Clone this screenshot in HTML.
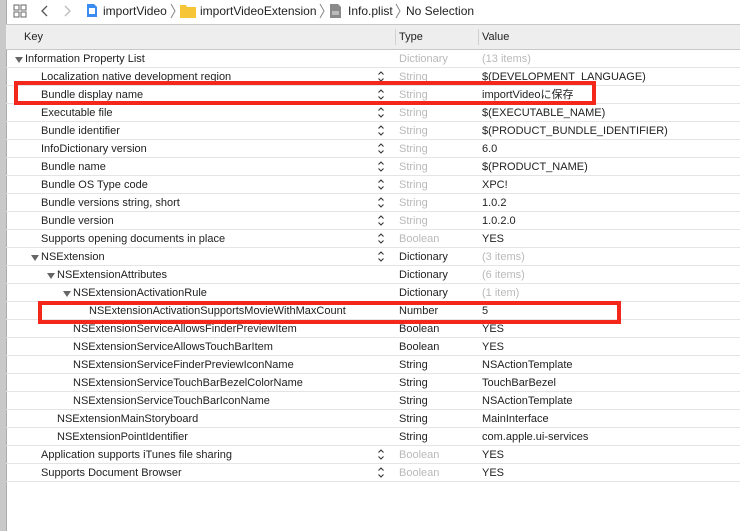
<!DOCTYPE html>
<html><head><meta charset="utf-8"><style>
body{margin:0;width:740px;height:531px;overflow:hidden;background:#fff;font-family:"Liberation Sans","Noto Sans CJK JP",sans-serif;font-size:11px;color:#222;position:relative}
.a{position:absolute;white-space:nowrap}
.r{position:absolute;left:6px;right:0;height:18px;border-bottom:1px solid #e4e4e4}
.r span{position:absolute;top:4px;white-space:nowrap;line-height:13px}
.g{color:#b9b9b9}
.r span.t{top:8px;width:0;height:0;border-left:4px solid transparent;border-right:4px solid transparent;border-top:6px solid #666}
.ch{position:absolute;left:371px;top:3px;width:8px;height:13px}
.box{position:absolute;border:4px solid #f4271b;box-sizing:border-box}
</style></head><body>
<svg width="0" height="0" style="position:absolute"><defs><symbol id="c" viewBox="0 0 8 13"><path d="M1.5 4.5 L4 2 L6.5 4.5 M1.5 8.5 L4 11 L6.5 8.5" stroke="#333" stroke-width="1.1" fill="none"/></symbol></defs></svg>
<div class="a" style="left:0;top:0;width:6px;height:531px;background:#c9c9c9;border-right:1px solid #aaa"></div>
<svg class="a" style="left:13px;top:4px" width="14" height="14" viewBox="0 0 14 14" fill="none" stroke="#666" stroke-width="1"><rect x="1" y="1" width="5" height="5"/><rect x="8" y="1" width="5" height="5"/><rect x="1" y="8" width="5" height="5"/><rect x="8" y="8" width="5" height="5"/></svg>
<svg class="a" style="left:40px;top:4px" width="10" height="14"><path d="M7 2 L2 7 L7 12" stroke="#555" stroke-width="1.3" fill="none"/></svg>
<svg class="a" style="left:63px;top:4px" width="10" height="14"><path d="M2 2 L7 7 L2 12" stroke="#bbb" stroke-width="1.3" fill="none"/></svg>
<svg class="a" style="left:86px;top:3px" width="12" height="15"><path d="M1 1h7l3 3v10H1z" fill="#3b8cf0"/><rect x="3" y="5" width="6" height="6" fill="#fff"/></svg>
<div class="a" style="left:103px;top:4px;font-size:12px">importVideo</div>
<svg class="a" style="left:170px;top:3px" width="6" height="16"><path d="M1 1 L5 8 L1 15" stroke="#888" fill="none"/></svg>
<svg class="a" style="left:180px;top:3px" width="16" height="15"><path d="M0 2h6l1 2h9v11H0z" fill="#f6c538"/></svg>
<div class="a" style="left:200px;top:4px;font-size:12px">importVideoExtension</div>
<svg class="a" style="left:319px;top:3px" width="6" height="16"><path d="M1 1 L5 8 L1 15" stroke="#888" fill="none"/></svg>
<svg class="a" style="left:330px;top:3px" width="12" height="15"><path d="M0 1h8l3 3v11H0z" fill="#8a8a8a"/><rect x="2" y="8" width="7" height="4" fill="#bbb"/></svg>
<div class="a" style="left:348px;top:4px;font-size:12px">Info.plist</div>
<svg class="a" style="left:395px;top:3px" width="6" height="16"><path d="M1 1 L5 8 L1 15" stroke="#888" fill="none"/></svg>
<div class="a" style="left:406px;top:4px;font-size:12px">No Selection</div>
<div class="a" style="left:6px;right:0;top:24px;height:24px;background:#eee;border-top:1px solid #c8c8c8;border-bottom:1px solid #c8c8c8"></div>
<div class="a" style="left:24px;top:31px">Key</div>
<div class="a" style="left:395px;top:29px;width:1px;height:16px;background:#d0d0d0"></div>
<div class="a" style="left:399px;top:31px">Type</div>
<div class="a" style="left:478px;top:29px;width:1px;height:16px;background:#d0d0d0"></div>
<div class="a" style="left:482px;top:31px">Value</div>

<div class="r" style="top:49px"><span class="t" style="left:9px"></span><span style="left:19px">Information Property List</span><span class="g" style="left:393px">Dictionary</span><span class="g" style="left:476px">(13 items)</span></div>
<div class="r" style="top:67px"><span style="left:35px">Localization native development region</span><svg class="ch"><use href="#c"/></svg><span class="g" style="left:393px">String</span><span style="left:476px">$(DEVELOPMENT_LANGUAGE)</span></div>
<div class="r" style="top:85px"><span style="left:35px">Bundle display name</span><svg class="ch"><use href="#c"/></svg><span class="g" style="left:393px">String</span><span style="left:476px">importVideoに保存</span></div>
<div class="r" style="top:103px"><span style="left:35px">Executable file</span><svg class="ch"><use href="#c"/></svg><span class="g" style="left:393px">String</span><span style="left:476px">$(EXECUTABLE_NAME)</span></div>
<div class="r" style="top:121px"><span style="left:35px">Bundle identifier</span><svg class="ch"><use href="#c"/></svg><span class="g" style="left:393px">String</span><span style="left:476px">$(PRODUCT_BUNDLE_IDENTIFIER)</span></div>
<div class="r" style="top:139px"><span style="left:35px">InfoDictionary version</span><svg class="ch"><use href="#c"/></svg><span class="g" style="left:393px">String</span><span style="left:476px">6.0</span></div>
<div class="r" style="top:157px"><span style="left:35px">Bundle name</span><svg class="ch"><use href="#c"/></svg><span class="g" style="left:393px">String</span><span style="left:476px">$(PRODUCT_NAME)</span></div>
<div class="r" style="top:175px"><span style="left:35px">Bundle OS Type code</span><svg class="ch"><use href="#c"/></svg><span class="g" style="left:393px">String</span><span style="left:476px">XPC!</span></div>
<div class="r" style="top:193px"><span style="left:35px">Bundle versions string, short</span><svg class="ch"><use href="#c"/></svg><span class="g" style="left:393px">String</span><span style="left:476px">1.0.2</span></div>
<div class="r" style="top:211px"><span style="left:35px">Bundle version</span><svg class="ch"><use href="#c"/></svg><span class="g" style="left:393px">String</span><span style="left:476px">1.0.2.0</span></div>
<div class="r" style="top:229px"><span style="left:35px">Supports opening documents in place</span><svg class="ch"><use href="#c"/></svg><span class="g" style="left:393px">Boolean</span><span style="left:476px">YES</span></div>
<div class="r" style="top:247px"><span class="t" style="left:25px"></span><span style="left:35px">NSExtension</span><svg class="ch"><use href="#c"/></svg><span style="left:393px">Dictionary</span><span class="g" style="left:476px">(3 items)</span></div>
<div class="r" style="top:265px"><span class="t" style="left:41px"></span><span style="left:51px">NSExtensionAttributes</span><span style="left:393px">Dictionary</span><span class="g" style="left:476px">(6 items)</span></div>
<div class="r" style="top:283px"><span class="t" style="left:57px"></span><span style="left:67px">NSExtensionActivationRule</span><span style="left:393px">Dictionary</span><span class="g" style="left:476px">(1 item)</span></div>
<div class="r" style="top:301px"><span style="left:83px">NSExtensionActivationSupportsMovieWithMaxCount</span><span style="left:393px">Number</span><span style="left:476px">5</span></div>
<div class="r" style="top:319px"><span style="left:67px">NSExtensionServiceAllowsFinderPreviewItem</span><span style="left:393px">Boolean</span><span style="left:476px">YES</span></div>
<div class="r" style="top:337px"><span style="left:67px">NSExtensionServiceAllowsTouchBarItem</span><span style="left:393px">Boolean</span><span style="left:476px">YES</span></div>
<div class="r" style="top:355px"><span style="left:67px">NSExtensionServiceFinderPreviewIconName</span><span style="left:393px">String</span><span style="left:476px">NSActionTemplate</span></div>
<div class="r" style="top:373px"><span style="left:67px">NSExtensionServiceTouchBarBezelColorName</span><span style="left:393px">String</span><span style="left:476px">TouchBarBezel</span></div>
<div class="r" style="top:391px"><span style="left:67px">NSExtensionServiceTouchBarIconName</span><span style="left:393px">String</span><span style="left:476px">NSActionTemplate</span></div>
<div class="r" style="top:409px"><span style="left:51px">NSExtensionMainStoryboard</span><span style="left:393px">String</span><span style="left:476px">MainInterface</span></div>
<div class="r" style="top:427px"><span style="left:51px">NSExtensionPointIdentifier</span><span style="left:393px">String</span><span style="left:476px">com.apple.ui-services</span></div>
<div class="r" style="top:445px"><span style="left:35px">Application supports iTunes file sharing</span><svg class="ch"><use href="#c"/></svg><span class="g" style="left:393px">Boolean</span><span style="left:476px">YES</span></div>
<div class="r" style="top:463px"><span style="left:35px">Supports Document Browser</span><svg class="ch"><use href="#c"/></svg><span class="g" style="left:393px">Boolean</span><span style="left:476px">YES</span></div>

<div class="box" style="left:14px;top:81px;width:582px;height:24px"></div>
<div class="box" style="left:38px;top:301px;width:583px;height:23px"></div>
</body></html>
